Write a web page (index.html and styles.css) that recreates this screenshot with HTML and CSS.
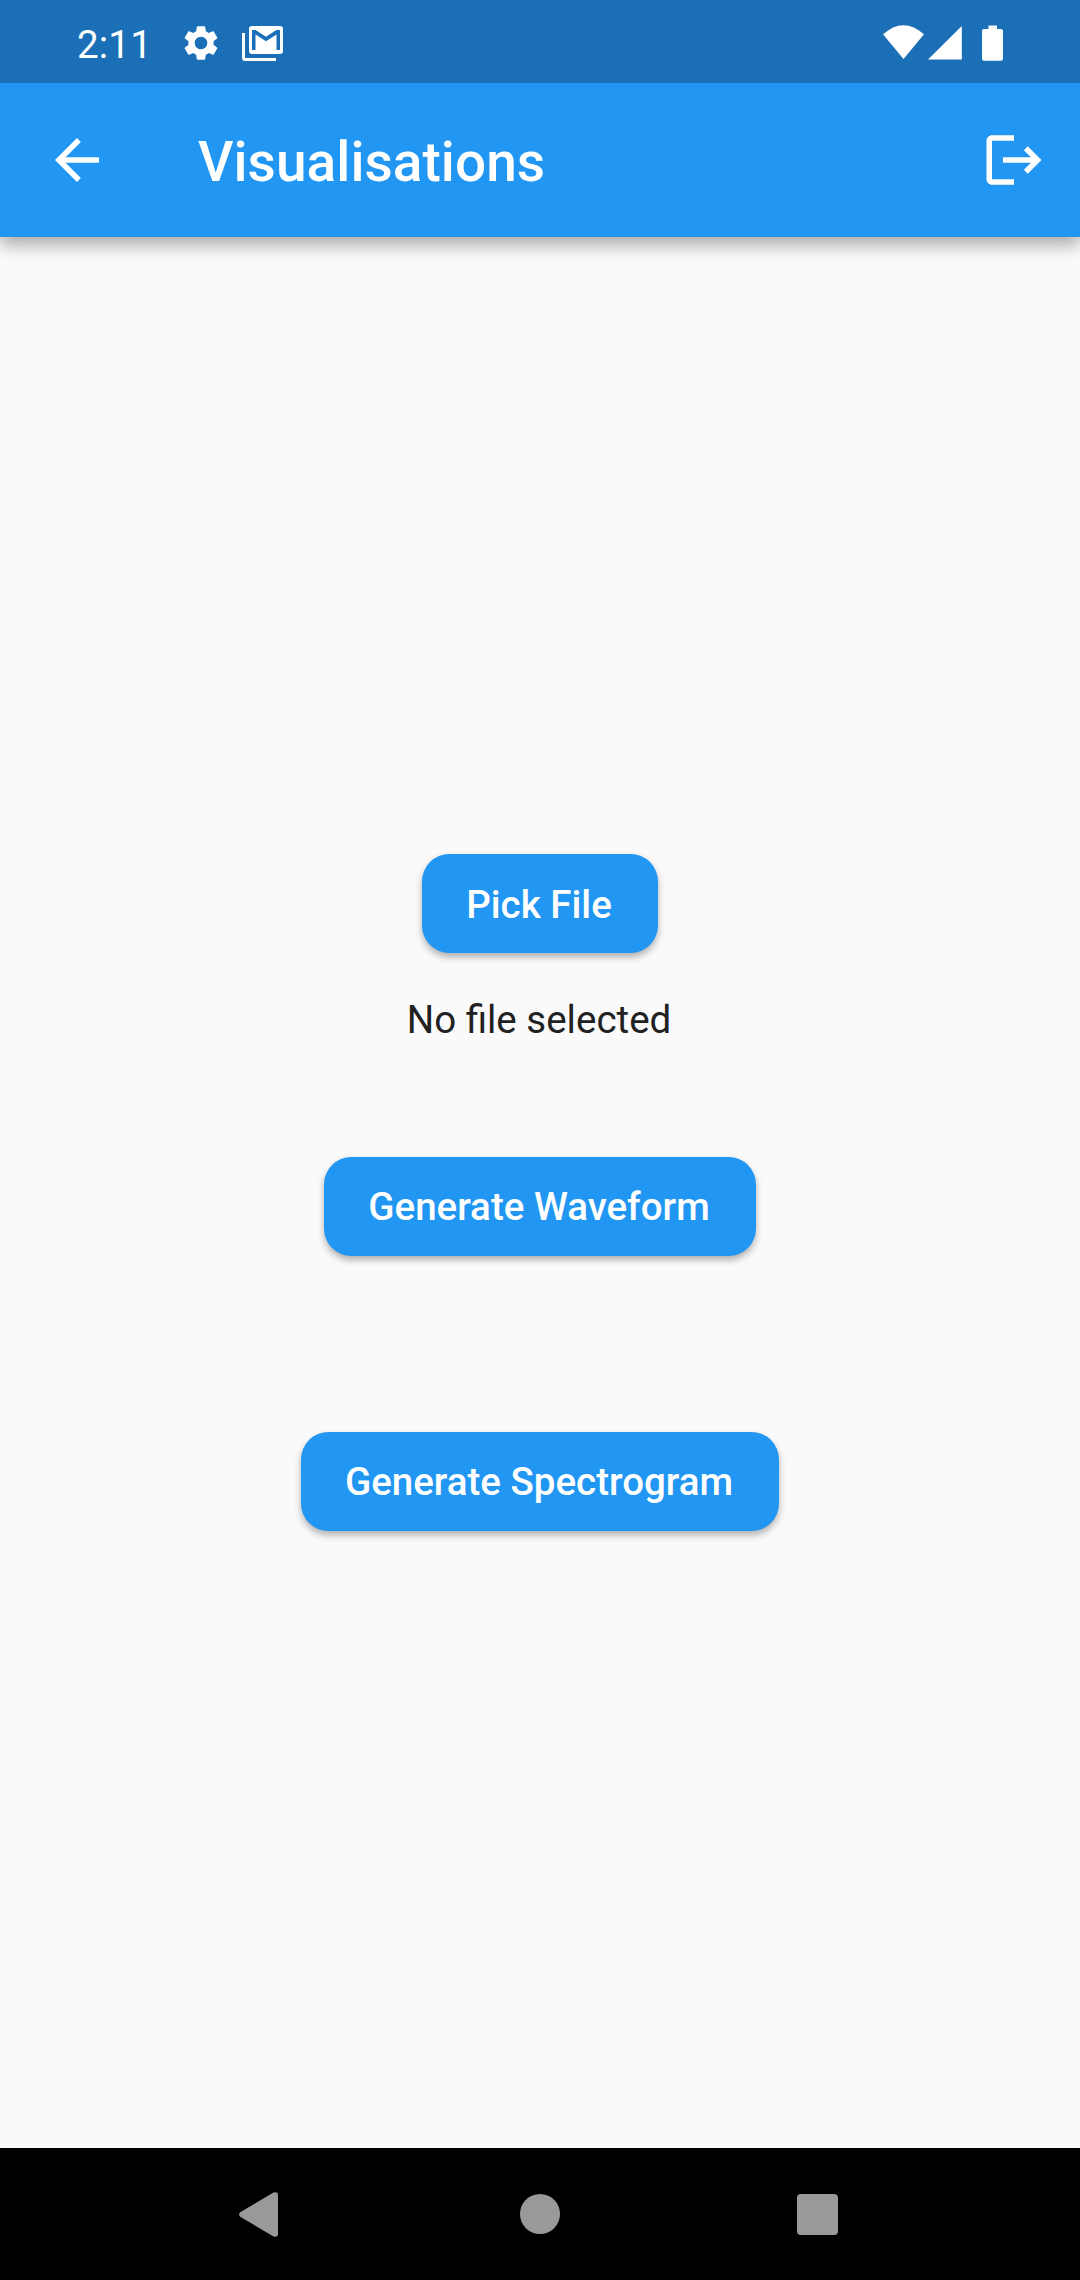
FILE: index.html
```html
<!DOCTYPE html>
<html lang="en">
<head>
<meta charset="utf-8">
<title>Visualisations</title>
<link rel="stylesheet" href="styles.css">
</head>
<body>
<div class="screen">
  <div class="status-bar">
    <div class="status-left">
      <span class="clock">2:11</span>
      <svg class="gear" viewBox="0 0 24 24"><path d="M19.14 12.94c.04-.3.06-.61.06-.94 0-.32-.02-.64-.07-.94l2.03-1.58c.18-.14.23-.41.12-.61l-1.92-3.32c-.12-.22-.37-.29-.59-.22l-2.39.96c-.5-.38-1.03-.7-1.62-.94l-.36-2.54c-.04-.24-.24-.41-.48-.41h-3.84c-.24 0-.43.17-.47.41l-.36 2.54c-.59.24-1.13.57-1.62.94l-2.39-.96c-.22-.08-.47 0-.59.22L2.74 8.87c-.12.21-.08.47.12.61l2.03 1.58c-.05.3-.09.63-.09.94s.02.64.07.94l-2.03 1.58c-.18.14-.23.41-.12.61l1.92 3.32c.12.22.37.29.59.22l2.39-.96c.5.38 1.03.7 1.62.94l.36 2.54c.05.24.24.41.48.41h3.84c.24 0 .44-.17.47-.41l.36-2.54c.59-.24 1.13-.56 1.62-.94l2.39.96c.22.08.47 0 .59-.22l1.92-3.32c.12-.22.07-.47-.12-.61l-2.01-1.58zM12 15.6c-1.98 0-3.6-1.62-3.6-3.6s1.62-3.6 3.6-3.6 3.6 1.62 3.6 3.6-1.62 3.6-3.6 3.6z"/></svg>
      <svg class="mail" viewBox="0 0 41 35"><path d="M0 7h3v25h31v3H3.500Q0 35 0 31.500z"/><path fill-rule="evenodd" d="M10 0h28q3 0 3 3v22q0 3-3 3H10q-3 0-3-3V3q0-3 3-3zM10 4v20h3.500V8.500l10.500 6.700 10.500-6.700V24H38V4h-3.500L24 10.700 13.500 4z"/></svg>
    </div>
    <svg class="signals" viewBox="0 0 120 36"><path d="M0 9.300Q20.500-9 41 9.300L20.500 34z"/><path d="M45 34.500 78.800 1v33.500z"/><path d="M105.500.500h8.500V4h4q2 0 2 2v27.700q0 2-2 2h-17q-2 0-2-2V6q0-2 2-2h4.500z"/></svg>
  </div>
  <header class="app-bar">
    <svg class="icon" viewBox="0 0 24 24"><path d="M20 11H7.830l5.590-5.590L12 4l-8 8 8 8 1.410-1.410L7.830 13H20v-2z"/></svg>
    <h1 class="title">Visualisations</h1>
    <svg class="icon" viewBox="0 0 24 24"><path d="M17 7l-1.410 1.410L18.170 11H8v2h10.170l-2.580 2.580L17 17l5-5zM4 5h8V3H4c-1.100 0-2 .900-2 2v14c0 1.100.900 2 2 2h8v-2H4z"/></svg>
  </header>
  <main class="content">
    <button class="button pick">Pick File</button>
    <p class="file-name">No file selected</p>
    <button class="button waveform">Generate Waveform</button>
    <button class="button spectrogram">Generate Spectrogram</button>
  </main>
  <nav class="nav-bar">
    <svg class="nav-back" viewBox="0 0 39 45"><path d="M1.500 20 34.500.600Q39-1 39 3.500v38Q39 46 34.500 44.400L1.500 25Q-1.200 22.500 1.500 20z"/></svg>
    <span class="nav-home"></span>
    <span class="nav-recent"></span>
  </nav>
</div>
</body>
</html>
```
FILE: styles.css
```css
* { box-sizing: border-box; }

body {
  margin: 0;
  font-family: Roboto, sans-serif;
  background: #fafafa;
}

svg { display: block; fill: #fff; }

.screen {
  display: flex;
  flex-direction: column;
  width: 1080px;
  height: 2280px;
}

.status-bar {
  display: flex;
  justify-content: space-between;
  z-index: 1;
  height: 83px;
  padding: 25px 77px 0;
  background: #1a6fb7;
}

.status-left { display: flex; }

.clock {
  width: 103px;
  color: #fff;
  font-size: 38.5px;
  letter-spacing: 0.2px;
  line-height: 39px;
}

.gear { width: 42px; height: 42px; margin-top: -3px; }
.mail { width: 41px; height: 35px; margin: 1px 0 0 20px; }
.signals { width: 120px; height: 36px; }

.app-bar {
  display: flex;
  align-items: center;
  flex: none;
  height: 154px;
  padding: 0 33px 0 44px;
  background: #2196f3;
  box-shadow: 0 8px 16px rgba(0, 0, 0, 0.32);
}

.icon { width: 66px; height: 66px; }

.title {
  flex: 1;
  margin: 4px 0 0 88px;
  color: #fff;
  font-size: 55px;
  font-weight: 500;
  letter-spacing: 0.05px;
  line-height: 64px;
}

.content {
  display: flex;
  flex: 1;
  flex-direction: column;
  align-items: center;
  padding-top: 617px;
}

.button {
  height: 99px;
  padding: 0 46px 0 44px;
  border: 0;
  border-radius: 27.5px;
  color: #fff;
  background: #2196f3;
  box-shadow: 0 4px 7px rgba(0, 0, 0, 0.3);
  font: 500 38.5px/45px Roboto, sans-serif;
}

.pick { padding-top: 2px; }

.file-name {
  margin: 43.5px 2px 0 0;
  color: #212121;
  font-size: 38.5px;
  line-height: 45px;
}

.waveform { margin-top: 115px; }
.spectrogram { margin-top: 176px; }

.nav-bar {
  display: flex;
  align-items: center;
  justify-content: space-between;
  height: 132px;
  padding: 0 242px 0 239px;
  background: #000;
}

.nav-back { width: 39px; height: 45px; fill: #999; }

.nav-home {
  width: 40px;
  height: 40px;
  margin-left: 5px;
  border-radius: 50%;
  background: #999;
}

.nav-recent {
  width: 41px;
  height: 41px;
  border-radius: 4px;
  background: #999;
}
```
